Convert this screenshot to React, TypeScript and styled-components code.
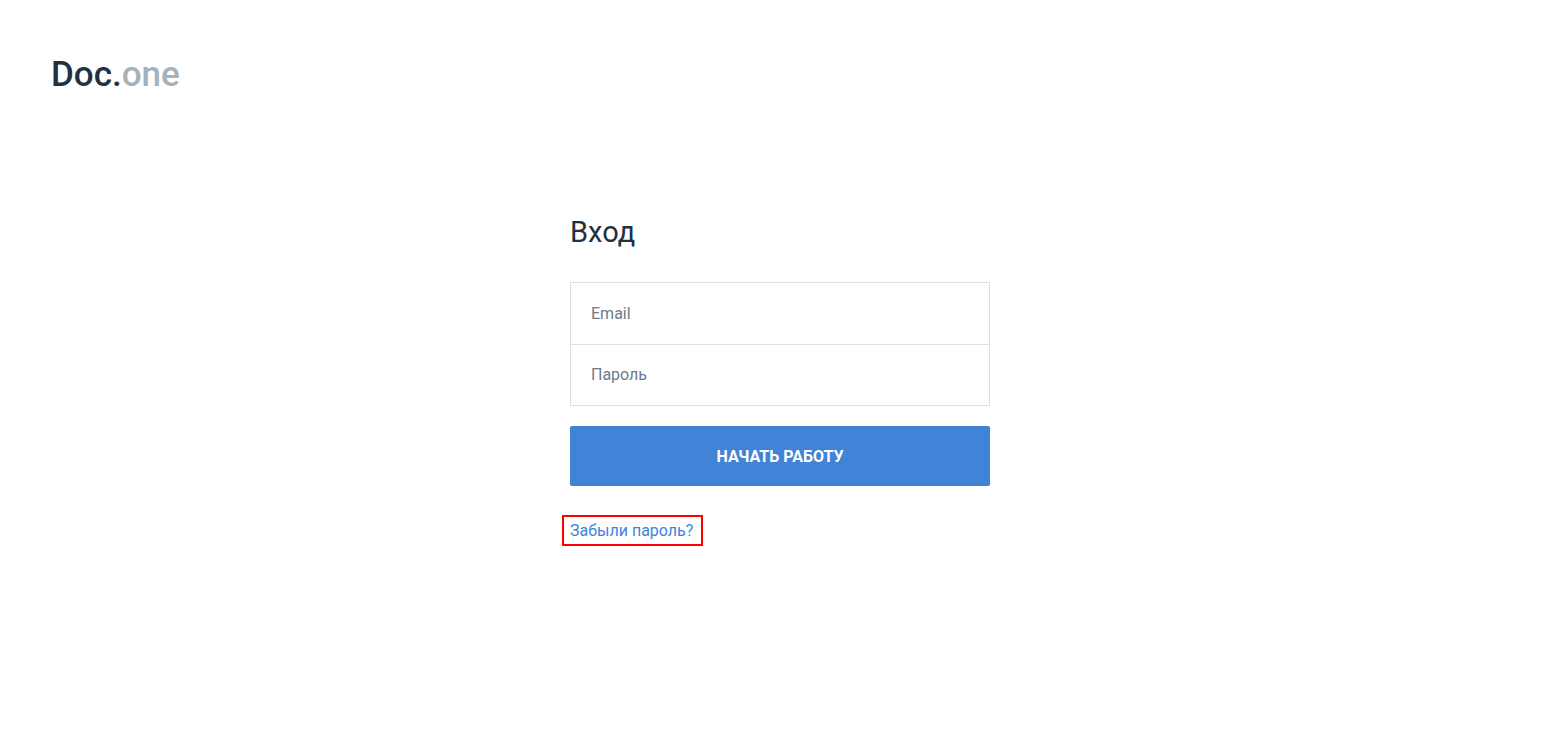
import React from "react";
import styled, { createGlobalStyle } from "styled-components";

const GlobalStyle = createGlobalStyle`
  *, *::before, *::after { box-sizing: border-box; }
  body {
    margin: 0;
    background: #fff;
    color: #22313f;
    font-family: Roboto, "Liberation Sans", sans-serif;
    font-size: 16px;
    line-height: 24px;
  }
`;

const Page = styled.div`
  display: flex;
  flex-direction: column;
`;

const Header = styled.header`
  display: flex;
  padding: 53px 51px 0;
`;

const Logo = styled.a`
  color: #22313f;
  font-size: 35px;
  font-weight: 500;
  line-height: 44px;
  text-decoration: none;
`;

const LogoSuffix = styled.span`
  color: #a5b1bc;
`;

const Main = styled.main`
  display: flex;
  justify-content: center;
  padding: 115px 20px 40px 25px;
`;

const LoginForm = styled.form`
  width: 100%;
  max-width: 420px;
`;

const Title = styled.h1`
  margin: 0 0 30px;
  font-size: 29px;
  font-weight: 400;
  line-height: 40px;
`;

const Fields = styled.div`
  margin-bottom: 20px;
  border: 1px solid #e0e0e0;
`;

const Field = styled.input`
  display: block;
  width: 100%;
  height: 61px;
  padding: 0 20px;
  border: 0;
  background: #fff;
  color: #22313f;
  font: inherit;

  & + & {
    padding-bottom: 2px;
    border-top: 1px solid #e0e0e0;
  }
  &::placeholder { color: #6c7a89; opacity: 1; }
`;

const SubmitButton = styled.button`
  display: block;
  width: 100%;
  height: 60px;
  padding: 2px 20px 0;
  border: 0;
  border-radius: 2px;
  background: #4183d7;
  color: #fff;
  font: inherit;
  font-weight: 700;
  text-transform: uppercase;
  cursor: pointer;
`;

const ForgotFrame = styled.div`
  width: fit-content;
  margin: 29px 0 0 -8px;
  padding: 2px 8px 1px 6px;
  border: 2px solid #f00;
`;

const ForgotLink = styled.a`
  color: #4183d7;
  text-decoration: none;
`;

export default function App() {
  return (
    <Page>
      <GlobalStyle />
      <Header>
        <Logo href="#">Doc.<LogoSuffix>one</LogoSuffix></Logo>
      </Header>
      <Main>
        <LoginForm>
          <Title>Вход</Title>
          <Fields>
            <Field type="email" name="email" placeholder="Email" aria-label="Email" />
            <Field type="password" name="password" placeholder="Пароль" aria-label="Пароль" />
          </Fields>
          <SubmitButton type="button">Начать работу</SubmitButton>
          <ForgotFrame>
            <ForgotLink href="#">Забыли пароль?</ForgotLink>
          </ForgotFrame>
        </LoginForm>
      </Main>
    </Page>
  );
}
